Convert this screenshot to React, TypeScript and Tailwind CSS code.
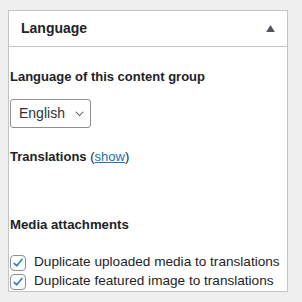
import { useState } from "react";

function Checkbox({ checked, onChange }: { checked: boolean; onChange: () => void }) {
  return (
    <button
      type="button"
      onClick={onChange}
      className="flex h-4 w-4 shrink-0 items-center justify-center rounded-[4px] border border-[#8c8f94] bg-white"
    >
      {checked && (
        <svg viewBox="0 0 20 20" className="h-[18px] w-[18px]">
          <path d="M4.5 10.5 L8.3 14 L15.5 5" fill="none" stroke="#3582c4" strokeWidth="2.4" strokeLinecap="round" strokeLinejoin="round" />
        </svg>
      )}
    </button>
  );
}

export default function App() {
  const [media, setMedia] = useState(true);
  const [featured, setFeatured] = useState(true);

  return (
    <div className="min-h-[302px] w-[302px] bg-[#f0f0f1] pl-2 pt-[10px] font-['Liberation_Sans',Arial,sans-serif] text-[#1d2327]">
      <div className="h-[282px] w-[280px] border border-[#c3c4c7] bg-white">
        <div className="flex h-9 items-center justify-between border-b border-[#c3c4c7] pl-3 pr-[12px]">
          <h2 className="text-[14px] font-semibold">Language</h2>
          <svg viewBox="0 0 10 8" className="h-[7px] w-[9px]">
            <path d="M5 0 L10 8 L0 8 Z" fill="#50575e" />
          </svg>
        </div>

        <div className="pl-[1px]">
          <p className="mt-5 text-[13px] font-semibold leading-5">Language of this content group</p>

          <button
            type="button"
            className="mt-3 flex h-[29px] w-[81px] items-center rounded-[3px] border border-[#8c8f94] pl-2 text-[14px] text-[#2c3338]"
          >
            English
            <svg viewBox="0 0 12 8" className="ml-[9px] h-[6px] w-[11px]">
              <path d="M1 1 L6 6 L11 1" fill="none" stroke="#50575e" strokeWidth="1.4" />
            </svg>
          </button>

          <p className="mt-[19px] text-[13px] leading-5">
            <span className="font-semibold">Translations</span>{" "}
            (<a href="#" className="text-[#2271b1] underline">show</a>)
          </p>

          <p className="mt-12 text-[13.2px] font-semibold leading-5">Media attachments</p>

          <div className="mt-[18px] flex flex-col">
            <label className="flex h-[19px] items-center gap-2 text-[13.6px]">
              <Checkbox checked={media} onChange={() => setMedia(!media)} />
              Duplicate uploaded media to translations
            </label>
            <label className="flex h-[19px] items-center gap-2 text-[13.6px]">
              <Checkbox checked={featured} onChange={() => setFeatured(!featured)} />
              Duplicate featured image to translations
            </label>
          </div>
        </div>
      </div>
    </div>
  );
}
